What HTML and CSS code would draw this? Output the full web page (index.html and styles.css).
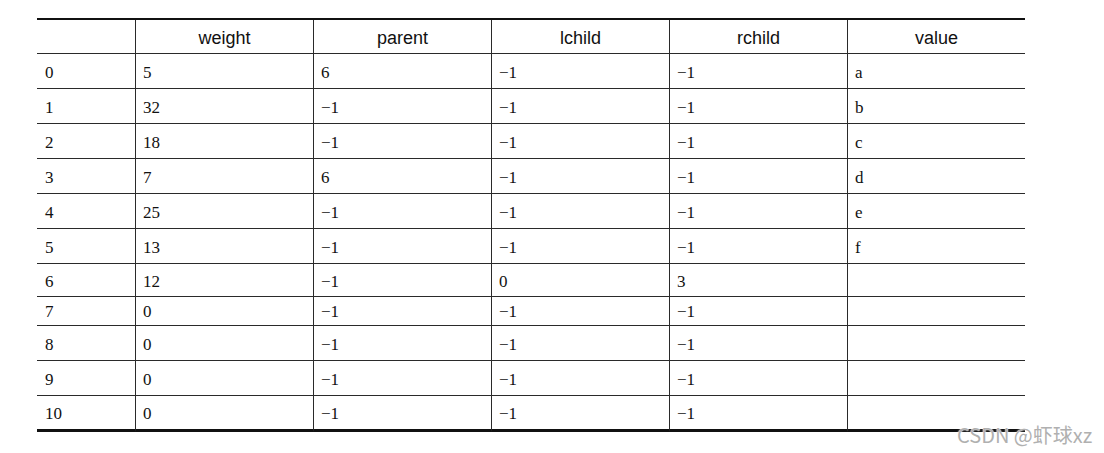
FILE: index.html
```html
<!DOCTYPE html>
<html>
<head>
<meta charset="utf-8">
<link rel="stylesheet" href="styles.css">
</head>
<body>
<div class="page">
  <table class="grid">
    <thead>
      <tr class="head">
        <th class="idx"></th><th>weight</th><th>parent</th><th>lchild</th><th>rchild</th><th>value</th>
      </tr>
    </thead>
    <tbody>
      <tr><td class="idx">0</td><td>5</td><td>6</td><td>−1</td><td>−1</td><td>a</td></tr>
      <tr><td class="idx">1</td><td>32</td><td>−1</td><td>−1</td><td>−1</td><td>b</td></tr>
      <tr><td class="idx">2</td><td>18</td><td>−1</td><td>−1</td><td>−1</td><td>c</td></tr>
      <tr><td class="idx">3</td><td>7</td><td>6</td><td>−1</td><td>−1</td><td>d</td></tr>
      <tr><td class="idx">4</td><td>25</td><td>−1</td><td>−1</td><td>−1</td><td>e</td></tr>
      <tr><td class="idx">5</td><td>13</td><td>−1</td><td>−1</td><td>−1</td><td>f</td></tr>
      <tr class="r6"><td class="idx">6</td><td>12</td><td>−1</td><td>0</td><td>3</td><td></td></tr>
      <tr class="r7"><td class="idx">7</td><td>0</td><td>−1</td><td>−1</td><td>−1</td><td></td></tr>
      <tr><td class="idx">8</td><td>0</td><td>−1</td><td>−1</td><td>−1</td><td></td></tr>
      <tr><td class="idx">9</td><td>0</td><td>−1</td><td>−1</td><td>−1</td><td></td></tr>
      <tr class="last"><td class="idx">10</td><td>0</td><td>−1</td><td>−1</td><td>−1</td><td></td></tr>
    </tbody>
  </table>
  <div class="watermark">CSDN @虾球xz</div>
</div>
</body>
</html>
```
FILE: styles.css
```css
html, body {
  margin: 0;
  padding: 0;
  background: #ffffff;
}
.page {
  position: relative;
  width: 1104px;
  height: 453px;
  padding: 18px 0 0 37px;
  box-sizing: border-box;
}
.grid {
  border-collapse: separate;
  border-spacing: 0;
  border-top: 2px solid #111;
  table-layout: fixed;
  width: 988px;
  color: #111;
}
.grid th, .grid td {
  width: 178px;
  border-bottom: 1px solid #2a2a2a;
  border-left: 1px solid #2a2a2a;
  padding: 0;
  box-sizing: border-box;
}
.grid th.idx, .grid td.idx {
  width: 98px;
  border-left: none;
}
.grid th {
  height: 34px;
  font-family: "Liberation Sans", Arial, sans-serif;
  font-weight: normal;
  font-size: 18px;
  text-align: center;
  vertical-align: middle;
  padding-top: 4px;
}
.grid td {
  height: 35px;
  font-family: "Liberation Serif", "Times New Roman", serif;
  font-size: 17px;
  text-align: left;
  vertical-align: middle;
  padding-left: 7px;
  padding-top: 3px;
}
.grid td.idx {
  padding-left: 8px;
}
.grid tr.r6 td {
  height: 33px;
}
.grid tr.r7 td {
  height: 29px;
  padding-top: 1px;
}
.grid tr.last td {
  height: 36px;
  border-bottom: 3px solid #111;
}
.watermark {
  position: absolute;
  left: 957px;
  top: 420px;
  font-family: "Noto Sans CJK SC", "Noto Sans", sans-serif;
  font-size: 20px;
  color: #b0b0b0;
  white-space: nowrap;
  text-shadow: 0 0 2px #fff, 0 0 1px #fff;
}
```
